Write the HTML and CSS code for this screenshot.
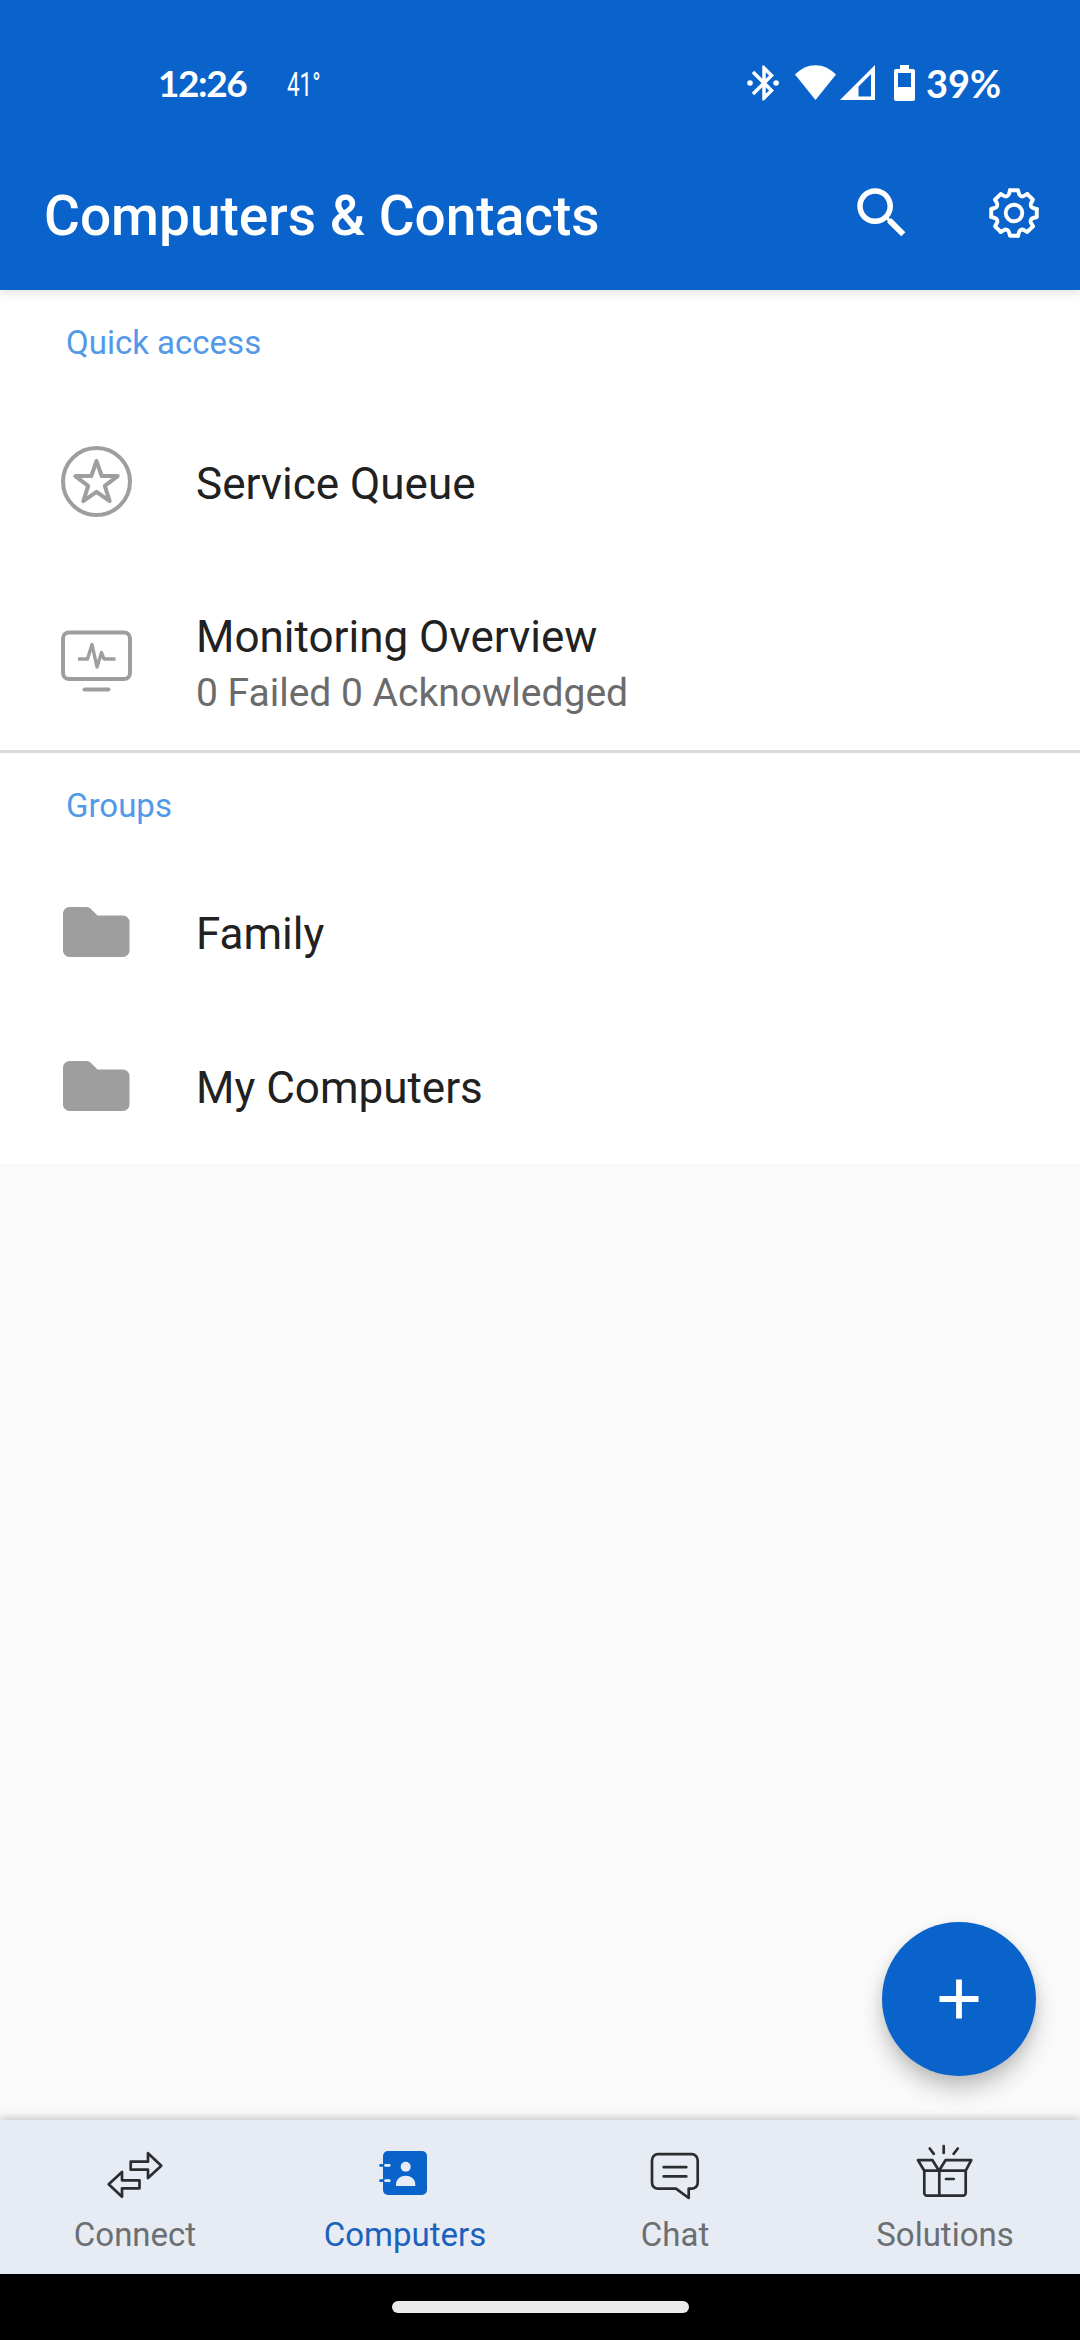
FILE: index.html
```html
<!DOCTYPE html>
<html lang="en">
  <head>
    <meta charset="utf-8">
    <title>Computers &amp; Contacts</title>
    <link rel="stylesheet" href="styles.css">
  </head>
  <body>
    <div id="app">
      <header>
        <div class="statusbar">
          <span class="time">12:26</span>
          <span class="temp">41°</span>
          <div class="indicators">
            <svg class="bluetooth" width="42" height="42" viewBox="0 0 24 24">
              <path d="M17.71 7.71L12 2h-1v7.59L6.41 5 5 6.41 10.59 12 5 17.59 6.41 19 11 14.41V22h1l5.71-5.71-4.3-4.29 4.3-4.29zM13 5.83l1.88 1.88L13 9.59V5.83zm1.88 10.46L13 18.17v-3.76l1.88 1.88z"/>
              <circle cx="4" cy="12" r="1.600"/>
              <circle cx="18.900" cy="12" r="1.600"/>
            </svg>
            <svg class="wifi" width="41" height="35" viewBox="0 0 41 35">
              <path d="M0 9.500C12-3 29-3 41 9.500L20.500 35z"/>
            </svg>
            <svg class="signal" width="35" height="35" viewBox="0 0 35 35">
              <path fill-rule="evenodd" d="M0 35L35 0V35zM18.500 21.500V31.500H31V9z"/>
            </svg>
            <svg class="battery" width="21" height="36" viewBox="0 0 21 36">
              <path fill-rule="evenodd" d="M6 0h9v4h4a2 2 0 0 1 2 2v28a2 2 0 0 1-2 2H2a2 2 0 0 1-2-2V6a2 2 0 0 1 2-2h4zM4 8v14h13V8z"/>
            </svg>
            <span class="percent">39%</span>
          </div>
        </div>
        <div class="toolbar">
          <h1>Computers &amp; Contacts</h1>
          <button class="action">
            <svg width="66" height="66" viewBox="0 0 24 24">
              <path fill="currentColor" d="M15.500 14h-.79l-.28-.27C15.410 12.590 16 11.110 16 9.500 16 5.910 13.090 3 9.500 3S3 5.910 3 9.500 5.910 16 9.500 16c1.610 0 3.090-.59 4.230-1.570l.27.28v.79l5 4.990L20.490 19l-4.990-5zm-6 0C7.010 14 5 11.990 5 9.500S7.010 5 9.500 5 14 7.010 14 9.500 11.990 14 9.500 14z"/>
            </svg>
          </button>
          <button class="action">
            <svg class="gear" width="66" height="66" viewBox="-33 -33 66 66">
              <circle r="8.300"/>
              <path id="tooth" d="M-4-22.800H4L5-19.200C5.600-16.900 8-15.900 10.040-17.100L13.300-18.950"/>
              <use href="#tooth" transform="rotate(45)"/>
              <use href="#tooth" transform="rotate(90)"/>
              <use href="#tooth" transform="rotate(135)"/>
              <use href="#tooth" transform="rotate(180)"/>
              <use href="#tooth" transform="rotate(225)"/>
              <use href="#tooth" transform="rotate(270)"/>
              <use href="#tooth" transform="rotate(315)"/>
            </svg>
          </button>
        </div>
      </header>

      <main>
        <section class="quick">
          <h2>Quick access</h2>
          <div class="row">
            <svg class="line star" width="73" height="73" viewBox="-36.500 -36.500 73 73">
              <circle r="33.500"/>
              <path d="M0-20.500L5.200-5.500 21.200-5.400 8.300 4.300 13.200 19.700 0 10.400-13.200 19.700-8.300 4.300-21.200-5.400-5.200-5.500z"/>
            </svg>
            <div class="label">
              <div class="name">Service Queue</div>
            </div>
          </div>
          <div class="row two-line">
            <svg class="line" width="73" height="62" viewBox="0 0 73 62">
              <rect x="3" y="2.500" width="67" height="46.500" rx="6"/>
              <path d="M24.500 59.500h24"/>
              <path class="pulse" d="M18 29h9.500L32 14.500 37 37l4.500-14.500L44 29h11.500"/>
            </svg>
            <div class="label">
              <div class="name">Monitoring Overview</div>
              <div class="info">0 Failed 0 Acknowledged</div>
            </div>
          </div>
        </section>

        <section class="groups">
          <h2>Groups</h2>
          <div class="row">
            <svg class="folder" width="73" height="50" viewBox="0 0 73 50">
              <path d="M9.500 0H27q2 0 3.500 1.500L37.500 8.500H63a6.500 6.500 0 0 1 6.500 6.500V43.500a6.500 6.500 0 0 1-6.500 6.500H9.500A6.500 6.500 0 0 1 3 43.500V6.500A6.500 6.500 0 0 1 9.500 0z"/>
            </svg>
            <div class="label">
              <div class="name">Family</div>
            </div>
          </div>
          <div class="row">
            <svg class="folder" width="73" height="50" viewBox="0 0 73 50">
              <path d="M9.500 0H27q2 0 3.500 1.500L37.500 8.500H63a6.500 6.500 0 0 1 6.500 6.500V43.500a6.500 6.500 0 0 1-6.500 6.500H9.500A6.500 6.500 0 0 1 3 43.500V6.500A6.500 6.500 0 0 1 9.500 0z"/>
            </svg>
            <div class="label">
              <div class="name">My Computers</div>
            </div>
          </div>
        </section>

        <button class="fab">
          <svg width="40" height="40" viewBox="0 0 40 40">
            <path d="M20 .5v39M.5 20h39"/>
          </svg>
        </button>
      </main>

      <nav>
        <a class="tab">
          <svg width="66" height="66" viewBox="0 0 66 66">
            <path d="M28.700 21.700H46V13.200L59.300 25.700 46 38V29.700H28.700z"/>
            <path d="M37.500 40.300H20V31.900L6.700 44.300 20 56.700V48.300H37.500z"/>
          </svg>
          Connect
        </a>
        <a class="tab active">
          <svg width="66" height="66" viewBox="0 0 66 66">
            <rect class="solid" x="11" y="11" width="44" height="44" rx="5"/>
            <path d="M8.500 25.400H12M8.500 40.700H12"/>
            <path class="cut" d="M13.500 25.400H17.300M13.500 40.700H17.300"/>
            <circle class="cut-fill" cx="33.700" cy="26.800" r="5"/>
            <path class="cut-fill" d="M24 46V44.500C24 32.800 43.300 32.800 43.300 44.500V46z"/>
          </svg>
          Computers
        </a>
        <a class="tab">
          <svg width="66" height="66" viewBox="0 0 66 66">
            <path d="M16 14.200H49.700a6 6 0 0 1 6 6V42.700a6 6 0 0 1-6 6H46.700V58L34 48.700H16a6 6 0 0 1-6-6V20.200a6 6 0 0 1 6-6z"/>
            <path d="M21.700 27.200H44.300M21.700 36.400H44.300"/>
          </svg>
          Chat
        </a>
        <a class="tab">
          <svg width="66" height="66" viewBox="0 0 66 66">
            <path d="M12.300 30.700H53.700V53a2.700 2.700 0 0 1-2.700 2.700H15A2.700 2.700 0 0 1 12.300 53zM27.300 30.700V55.700"/>
            <path d="M12.300 30.700L6 20.200H20.500L27 30.700 33.500 20.200H59.300L53.700 30.700M34 39H41.700"/>
            <path d="M17.700 8.500L21.800 13.800M31.700 6V13M45.800 8.500L41.600 13.800"/>
          </svg>
          Solutions
        </a>
      </nav>
      <footer><div class="pill"></div></footer>
    </div>
  </body>
</html>
```
FILE: styles.css
```css
* {
  box-sizing: border-box;
  margin: 0;
  padding: 0;
}
body {
  background: #fafafa;
  font-family: Roboto, "Noto Sans", sans-serif;
}
#app {
  display: flex;
  flex-direction: column;
  height: 2340px;
  width: 1080px;
}
svg {
  display: block;
  flex-shrink: 0;
}
button {
  background: none;
  border: none;
  color: white;
}
header {
  background: #0a63ca;
  box-shadow: 0 3px 10px rgba(0, 0, 0, 0.12);
  color: white;
  position: relative;
  z-index: 1;
}
.statusbar {
  align-items: center;
  display: flex;
  height: 136px;
  padding: 29px 79px 0 158px;
  white-space: nowrap;
}
.time {
  font-family: Lato, sans-serif;
  font-size: 37px;
  font-weight: bold;
  letter-spacing: -1.4px;
  width: 129px;
}
.temp {
  font-size: 34px;
  font-weight: 400;
  padding-top: 2px;
  transform: scaleX(0.66);
  transform-origin: left;
}
.indicators {
  align-items: center;
  display: flex;
  fill: white;
  margin-left: auto;
}
.wifi {
  margin-left: 10px;
}
.signal {
  margin-left: 4px;
}
.battery {
  margin-left: 19px;
}
.percent {
  font-family: Lato, sans-serif;
  font-size: 38px;
  font-weight: bold;
  margin-left: 11px;
  width: 75px;
}
.toolbar {
  align-items: center;
  display: flex;
  height: 154px;
  padding-left: 44px;
}
.toolbar h1 {
  flex-grow: 1;
  font-size: 55px;
  font-weight: 500;
  padding-top: 6px;
}
.action {
  display: flex;
  justify-content: center;
  width: 132px;
}
.gear {
  fill: none;
  stroke: white;
  stroke-linecap: round;
  stroke-linejoin: round;
  stroke-width: 3.9;
}
main {
  flex-grow: 1;
  position: relative;
}
section {
  background: white;
}
.quick {
  border-bottom: 3px solid #dadada;
}
h2 {
  color: #5299e8;
  font-size: 33px;
  font-weight: 400;
  height: 103px;
  line-height: 105px;
  padding-left: 66px;
}
.row {
  align-items: center;
  display: flex;
  gap: 63px;
  height: 154px;
  padding-left: 60px;
}
.quick .row {
  height: 179px;
}
.quick .two-line {
  height: 178px;
}
.label {
  line-height: 56px;
  padding-top: 1px;
}
.quick .label {
  padding-top: 2px;
}
.quick .two-line .label {
  padding-top: 8px;
}
.name {
  color: #212121;
  font-size: 44px;
}
.info {
  color: #6b6b6b;
  font-size: 39px;
}
.line {
  fill: none;
  stroke: #9e9e9e;
  stroke-linecap: round;
  stroke-linejoin: round;
  stroke-width: 4;
}
.star {
  margin-bottom: 2px;
}
.line .pulse {
  stroke-linecap: butt;
  stroke-width: 3.4;
}
.folder {
  fill: #9e9e9e;
  margin-bottom: 3px;
}
.fab {
  align-items: center;
  background: #0a63ca;
  border-radius: 50%;
  bottom: 44px;
  box-shadow: 0 14px 22px rgba(0, 0, 0, 0.2), 0 4px 12px rgba(0, 0, 0, 0.08);
  display: flex;
  height: 154px;
  justify-content: center;
  position: absolute;
  right: 44px;
  width: 154px;
}
.fab svg {
  stroke: white;
  stroke-width: 5.8;
}
nav {
  background: #e7ebf3;
  box-shadow: 0 -2px 9px rgba(0, 0, 0, 0.22);
  display: flex;
  height: 154px;
  position: relative;
}
.tab {
  align-items: center;
  color: #6c6f72;
  display: flex;
  flex: 1;
  flex-direction: column;
  font-size: 33px;
  line-height: 40px;
  padding-top: 20px;
  gap: 9px;
}
.tab svg {
  fill: none;
  stroke: #2b2e31;
  stroke-linecap: round;
  stroke-linejoin: round;
  stroke-width: 2.7;
}
.tab.active {
  color: #1a62bd;
}
.tab.active svg {
  stroke: #0a63ca;
}
.tab .solid {
  fill: #0a63ca;
  stroke: none;
}
.tab.active .cut {
  stroke: #e7ebf3;
}
.tab .cut-fill {
  fill: #e7ebf3;
  stroke: none;
}
footer {
  background: black;
  display: flex;
  height: 66px;
  justify-content: center;
  padding-top: 27px;
  position: relative;
}
.pill {
  background: #ebebeb;
  border-radius: 6px;
  height: 12px;
  width: 297px;
}
```
